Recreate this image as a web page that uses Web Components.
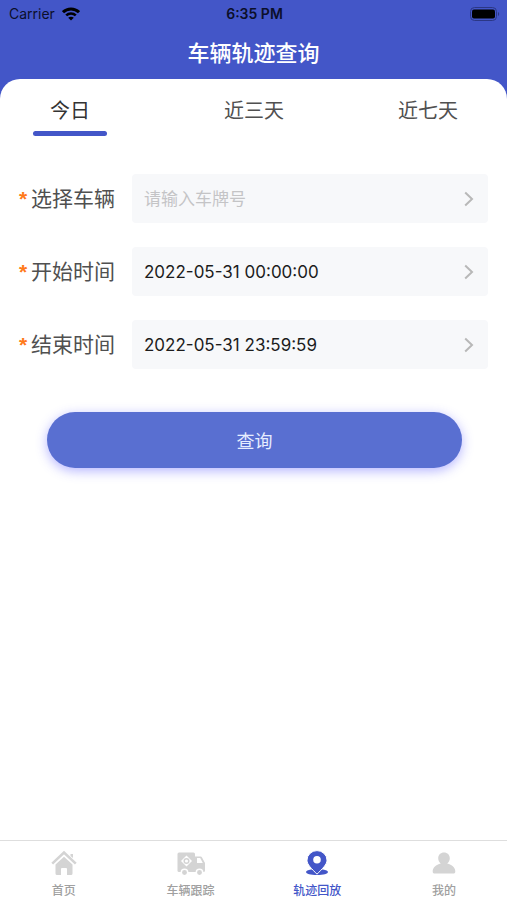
<!DOCTYPE html>
<html lang="zh-CN">
<head>
<meta charset="utf-8">
<meta name="viewport" content="width=device-width, initial-scale=1">
<title>车辆轨迹查询</title>
<style>
  body {
    margin: 0;
    background: #fff;
    font-family: Inter, "Noto Sans CJK SC", sans-serif;
    color: #444;
    --primary: #4356c8;
  }
</style>
</head>
<body>
<track-page>
  <status-bar slot="top"></status-bar>
  <span slot="title">车辆轨迹查询</span>
  <range-tabs></range-tabs>
  <query-form>
    <form-row label="选择车辆" placeholder="请输入车牌号"></form-row>
    <form-row label="开始时间" value="2022-05-31 00:00:00"></form-row>
    <form-row label="结束时间" value="2022-05-31 23:59:59"></form-row>
    <span slot="submit">查询</span>
  </query-form>
  <nav-bar slot="bottom">
    <nav-item href="#home" icon="home">首页</nav-item>
    <nav-item href="#follow" icon="truck">车辆跟踪</nav-item>
    <nav-item href="#track" icon="pin" active>轨迹回放</nav-item>
    <nav-item href="#mine" icon="user">我的</nav-item>
  </nav-bar>
</track-page>

<script>
class TrackPage extends HTMLElement {
  connectedCallback() {
    const shadow = this.attachShadow({ mode: "open" });
    shadow.innerHTML = `
    <header>
      <slot name="top"></slot>
      <h1><slot name="title"></slot></h1>
    </header>
    <main><slot></slot></main>
    <slot name="bottom"></slot>
    <style>
    :host {
      display: flex;
      flex-direction: column;
      min-height: 100vh;
    }
    header {
      background: var(--primary);
      padding-bottom: 32px;
    }
    h1 {
      margin: 0;
      padding: 9px 0;
      font-size: 22px;
      line-height: 34px;
      font-weight: 500;
      text-align: center;
      color: #fff;
    }
    main {
      flex: 1;
      margin-top: -32px;
      border-radius: 20px 20px 0 0;
      background: #fff;
    }
    </style>`;
  }
}

class StatusBar extends HTMLElement {
  connectedCallback() {
    const shadow = this.attachShadow({ mode: "open" });
    shadow.innerHTML = `
    <div class="carrier">
      Carrier
      <svg width="18" height="14" viewBox="0 0 18 14" fill="none" stroke="#000" stroke-width="3">
        <path d="M1 5.2C5.4.9 12.6.9 17 5.2" />
        <path d="M4.2 8.4c2.7-2.6 6.9-2.6 9.6 0" stroke-width="2.6" />
        <path d="M9 13.6 6.2 10.8c1.6-1.5 4-1.5 5.6 0z" fill="#000" stroke="none" />
      </svg>
    </div>
    <b>6:35 PM</b>
    <svg class="battery" width="30" height="14" viewBox="0 0 30 14">
      <rect x=".5" y=".5" width="26" height="13" rx="4" fill="none" stroke="#2b3785" />
      <rect x="2" y="2.5" width="23" height="9" rx="2" />
      <path d="M28 5c1.6.6 1.6 3.4 0 4z" fill="#2b3785" />
    </svg>
    <style>
    :host {
      display: grid;
      grid-template-columns: 1fr auto 1fr;
      align-items: center;
      height: 27px;
      padding: 0 7px 0 9px;
      font-size: 14px;
      color: #0b0f2a;
    }
    .carrier {
      display: flex;
      align-items: center;
      gap: 7px;
    }
    b {
      font-size: 14px;
      font-weight: 600;
    }
    .battery {
      justify-self: end;
    }
    </style>`;
  }
}

class RangeTabs extends HTMLElement {
  connectedCallback() {
    const shadow = this.attachShadow({ mode: "open" });
    shadow.innerHTML = `
    <div class="tabs" role="tablist">
      <button role="tab" aria-selected="true">今日</button>
      <button role="tab" aria-selected="false">近三天</button>
      <button role="tab" aria-selected="false">近七天</button>
    </div>
    <style>
    :host {
      display: block;
      padding: 0 32px 0 33px;
    }
    .tabs {
      display: grid;
      grid-template-columns: 1fr auto 1fr;
    }
    button {
      display: flex;
      flex-direction: column;
      align-items: center;
      gap: 5px;
      border: 0;
      padding: 17px 17px 0;
      background: none;
      font: inherit;
      font-size: 20px;
      line-height: 30px;
      color: #505050;
      justify-self: start;
    }
    button:last-child {
      justify-self: end;
    }
    button::after {
      content: "";
      height: 5px;
      border-radius: 3px;
      margin: 0 -17px;
      align-self: stretch;
    }
    button[aria-selected="true"] {
      color: #333;
    }
    button[aria-selected="true"]::after {
      background: var(--primary);
    }
    </style>`;
    const tabs = shadow.querySelectorAll("button");
    tabs.forEach((tab) => {
      tab.addEventListener("click", () => {
        tabs.forEach((t) => t.setAttribute("aria-selected", t === tab));
      });
    });
  }
}

class QueryForm extends HTMLElement {
  connectedCallback() {
    const shadow = this.attachShadow({ mode: "open" });
    shadow.innerHTML = `
    <div class="rows"><slot></slot></div>
    <button type="button"><slot name="submit"></slot></button>
    <style>
    :host {
      display: block;
      padding: 38px 19px 0;
    }
    .rows {
      display: flex;
      flex-direction: column;
      gap: 24px;
    }
    button {
      display: block;
      width: calc(100% - 54px);
      height: 56px;
      margin: 43px auto 0 28px;
      border: 0;
      border-radius: 28px;
      background: #596fd1;
      box-shadow: 0 3px 12px rgba(70, 70, 255, 0.4);
      font: inherit;
      font-size: 18px;
      color: #e6edff;
    }
    </style>`;
  }
}

class FormRow extends HTMLElement {
  connectedCallback() {
    const label = this.getAttribute("label");
    const value = this.getAttribute("value") || "";
    const placeholder = this.getAttribute("placeholder") || "";
    const shadow = this.attachShadow({ mode: "open" });
    shadow.innerHTML = `
    <label for="field"><i>*</i>${label}</label>
    <div class="box">
      <input id="field" type="text" readonly value="${value}" placeholder="${placeholder}">
      <svg width="10" height="16" viewBox="0 0 10 16" fill="none" stroke="#b8b8b8" stroke-width="2">
        <path d="M1.2 1.5 8 8l-6.8 6.5" />
      </svg>
    </div>
    <style>
    :host {
      display: flex;
      align-items: center;
      height: 49px;
    }
    label {
      display: flex;
      align-items: center;
      flex: none;
      width: 113px;
      font-size: 21px;
      line-height: 30px;
      color: #505050;
      white-space: nowrap;
    }
    i {
      width: 12px;
      font-family: "Liberation Sans", sans-serif;
      font-size: 21px;
      font-style: normal;
      font-weight: 700;
      color: #ff7a1a;
    }
    .box {
      display: flex;
      align-items: center;
      flex: 1;
      min-width: 0;
      height: 100%;
      box-sizing: border-box;
      padding: 0 14px 0 12px;
      border-radius: 4px;
      background: #f7f8fa;
    }
    input {
      flex: 1;
      min-width: 0;
      border: 0;
      padding: 0;
      outline: 0;
      background: none;
      font: inherit;
      font-size: 17px;
      line-height: 26px;
      color: #1c1c1c;
    }
    input::placeholder {
      color: #c4c4c6;
      opacity: 1;
    }
    </style>`;
  }
}

class NavBar extends HTMLElement {
  connectedCallback() {
    const shadow = this.attachShadow({ mode: "open" });
    shadow.innerHTML = `
    <nav><slot></slot></nav>
    <style>
    :host {
      display: block;
      border-top: 1px solid #dedede;
      background: #fff;
    }
    nav {
      display: grid;
      grid-template-columns: repeat(4, 1fr);
      height: 59px;
    }
    </style>`;
  }
}

const icons = {
  home: `
    <path d="M2.200 14.600 14 3.600l11.800 11" fill="none" stroke="currentColor" stroke-width="2.600" />
    <path d="M20.500 5h2.500v4l-2.500-2z" />
    <path d="M14 7.800 5.500 15.600v8.900q0 1.500 1.500 1.500h4v-6q0-1 1-1h4q1 0 1 1v6h4q1.500 0 1.500-1.500v-8.900z" />`,
  truck: `
    <path d="M2 3.500h14.500q1.500 0 1.500 1.500v18H2Q.5 23 .5 21.500V5Q.5 3.500 2 3.500z" />
    <path d="M17.500 7.500h6q1 0 1.500 1l3 5.500v7.500q0 1.500-1.500 1.500h-9z" />
    <path d="M20 9h3.200l2.600 5H20z" fill="#fff" />
    <path d="M9.500 6.500 15 12l-5.500 5.500L4 12z" fill="#fff" />
    <circle cx="9.500" cy="12" r="2.300" fill="none" stroke="currentColor" stroke-width="1.500" />
    <g stroke="#fff" stroke-width="1.500">
      <circle cx="7.500" cy="23.500" r="3.200" />
      <circle cx="22.500" cy="23.500" r="3.200" />
    </g>`,
  pin: `
    <path d="M8 20.500c-3 .5-5 1.400-5 2.600 0 1.700 4.600 3 11 3s11-1.300 11-3c0-1.200-2-2.100-5-2.600z" />
    <path d="M14 25.200C8.500 19.500 4 15.600 4 11.200A10 9.600 0 0 1 24 11.200C24 15.600 19.500 19.500 14 25.200z" stroke="#fff" />
    <circle cx="14" cy="10.800" r="3.800" fill="#fff" />`,
  user: `
    <path d="M14 3.500c3.400 0 5.800 2.400 5.800 5.700 0 2.200-1 4-2.600 5.200 4.800 1.100 8.100 4 8.100 8.100 0 1.400-.7 2-2 2H4.700c-1.300 0-2-.6-2-2 0-4.100 3.300-7 8.100-8.100-1.600-1.200-2.600-3-2.600-5.200 0-3.300 2.400-5.700 5.800-5.700z" />`,
};

class NavItem extends HTMLElement {
  connectedCallback() {
    const shadow = this.attachShadow({ mode: "open" });
    shadow.innerHTML = `
    <a href="${this.getAttribute("href")}">
      <svg width="28" height="28" viewBox="0 0 28 28" fill="currentColor">${icons[this.getAttribute("icon")]}</svg>
      <span><slot></slot></span>
    </a>
    <style>
    :host {
      display: block;
      --icon: #d4d4d4;
      --text: #a0a0a0;
    }
    :host([active]) {
      --icon: var(--primary);
      --text: var(--primary);
    }
    a {
      display: flex;
      flex-direction: column;
      align-items: center;
      gap: 5px;
      padding: 8px 0 0 1px;
      font-size: 12px;
      line-height: 18px;
      font-weight: 500;
      color: var(--text);
      text-decoration: none;
    }
    svg {
      color: var(--icon);
    }
    </style>`;
  }
}

customElements.define("track-page", TrackPage);
customElements.define("status-bar", StatusBar);
customElements.define("range-tabs", RangeTabs);
customElements.define("query-form", QueryForm);
customElements.define("form-row", FormRow);
customElements.define("nav-bar", NavBar);
customElements.define("nav-item", NavItem);
</script>
</body>
</html>
